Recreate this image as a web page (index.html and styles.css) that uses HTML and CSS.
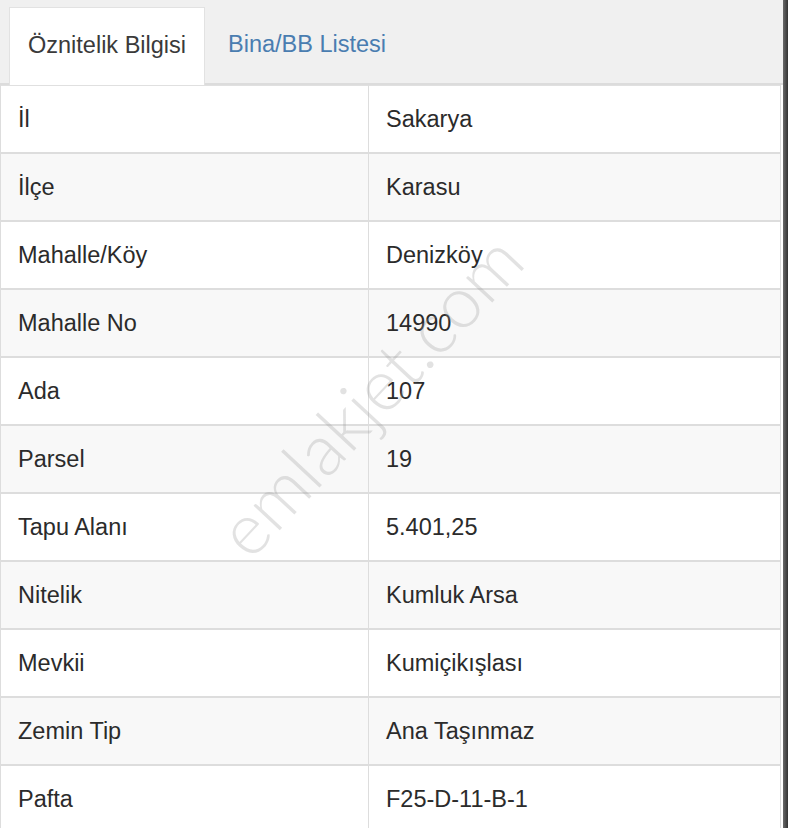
FILE: index.html
```html
<!DOCTYPE html>
<html lang="tr">

<head>
    <meta charset="UTF-8">
    <meta name="viewport" content="width=device-width, initial-scale=1.0">
    <title>Parsel Bilgisi</title>
    <link rel="stylesheet" href="styles.css">
</head>

<body>
    <div class="frame">
        <div class="panel">
            <!-- Tabs -->
            <ul class="tabs">
                <li class="tab active">Öznitelik Bilgisi</li>
                <li class="tab">Bina/BB Listesi</li>
            </ul>

            <!-- Attribute table -->
            <div class="table-wrap">
                <table class="attr-table">
                    <tbody>
                        <tr><td>İl</td><td>Sakarya</td></tr>
                        <tr><td>İlçe</td><td>Karasu</td></tr>
                        <tr><td>Mahalle/Köy</td><td>Denizköy</td></tr>
                        <tr><td>Mahalle No</td><td>14990</td></tr>
                        <tr><td>Ada</td><td>107</td></tr>
                        <tr><td>Parsel</td><td>19</td></tr>
                        <tr><td>Tapu Alanı</td><td>5.401,25</td></tr>
                        <tr><td>Nitelik</td><td>Kumluk Arsa</td></tr>
                        <tr><td>Mevkii</td><td>Kumiçikışlası</td></tr>
                        <tr><td>Zemin Tip</td><td>Ana Taşınmaz</td></tr>
                        <tr><td>Pafta</td><td>F25-D-11-B-1</td></tr>
                    </tbody>
                </table>
                <div class="watermark">emlakjet.com</div>
            </div>
        </div>
        <div class="edge"></div>
    </div>
</body>

</html>
```

FILE: styles.css
```css
body {
    margin: 0;
    padding: 0;
    font-family: "Liberation Sans", Arial, sans-serif;
    background-color: #ffffff;
    overflow: hidden;
}

.frame {
    display: flex;
    height: 828px;
}

.panel {
    width: 783px;
    background-color: #ffffff;
}

/* dark strip on the right side of the screenshot */
.edge {
    flex: 1;
    background: linear-gradient(to right, #6a6a6a, #333333);
}

.tabs {
    display: flex;
    margin: 0;
    padding: 7px 0 0 9px;
    list-style: none;
    background-color: #f0f0f0;
    border-bottom: 2px solid #dcdcdc;
    height: 76px;
}

.tab {
    padding: 24px 18px 0 23px;
    font-size: 23.5px;
    color: #4a7db0;
    height: 52px;
}

.tab.active {
    background-color: #ffffff;
    color: #3a3a3a;
    border: 1px solid #e2e2e2;
    border-bottom: none;
    margin-bottom: -2px;
    padding-left: 18px;
    height: 53px;
}

.table-wrap {
    position: relative;
    overflow: hidden;
}

.attr-table {
    width: 781px;
    border-collapse: collapse;
    border: 1px solid #e0e0e0;
}

.attr-table td {
    height: 66px;
    padding: 0 17px;
    border: 1px solid #dddddd;
    border-top: 2px solid #dddddd;
    font-size: 23.5px;
    color: #2b2b2b;
    vertical-align: middle;
}

.attr-table tr:first-child td {
    border-top: none;
}

.attr-table td:first-child {
    width: 333px;
}

.attr-table tr:nth-child(even) {
    background-color: #f8f8f8;
}

.watermark {
    position: absolute;
    left: 165px;
    top: 266px;
    transform: rotate(-47deg);
    font-family: Lato, "Liberation Sans", sans-serif;
    font-weight: 300;
    font-size: 72px;
    color: rgba(150, 150, 150, 0.28);
    pointer-events: none;
    white-space: nowrap;
}
```
